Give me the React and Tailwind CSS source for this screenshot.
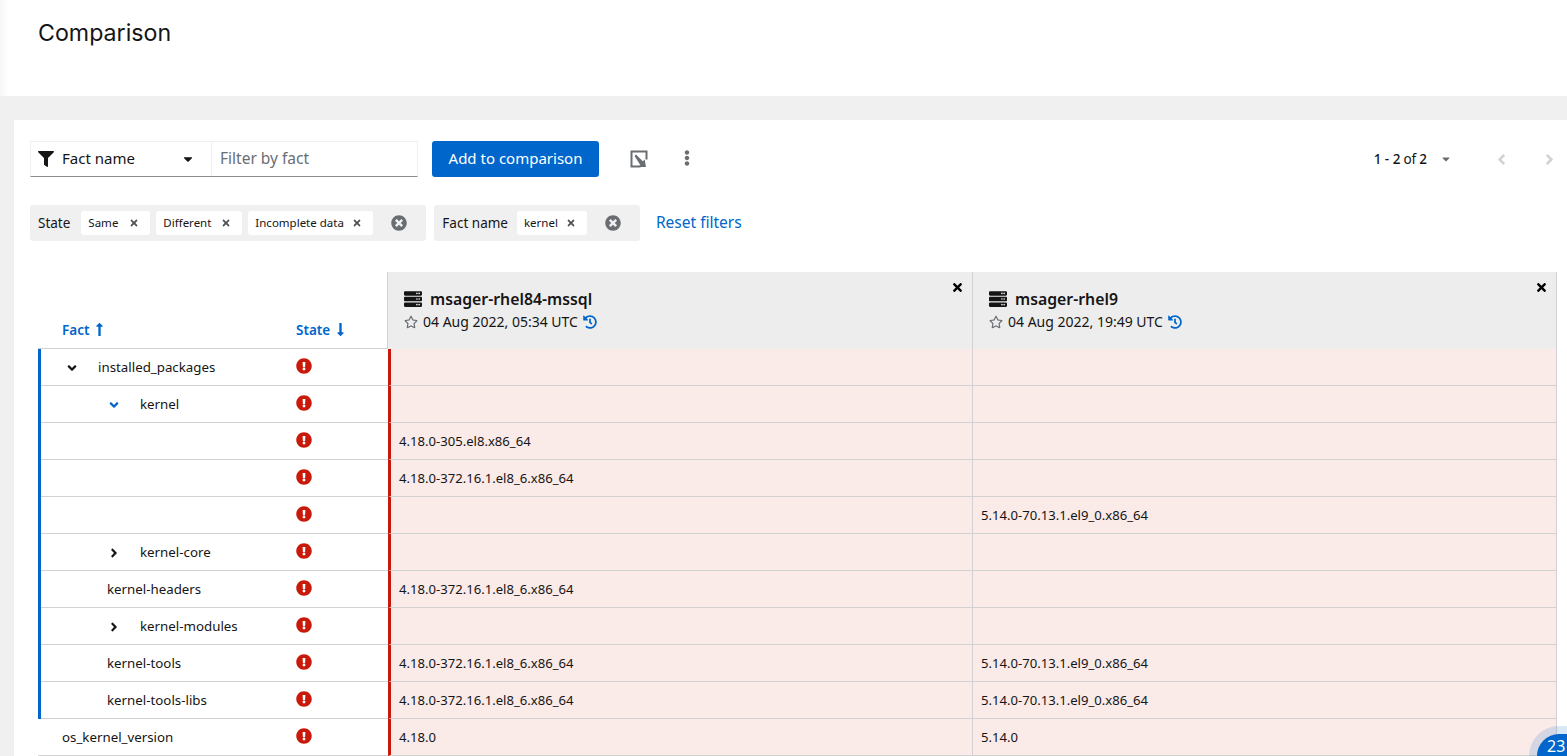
import React from 'react';
import {
  FaFilter, FaCaretDown, FaTimes, FaTimesCircle, FaExclamationCircle, FaAngleDown, FaAngleRight,
  FaAngleLeft, FaEllipsisV, FaLongArrowAltUp, FaLongArrowAltDown, FaServer, FaRegStar, FaHistory,
} from 'react-icons/fa';

const OLD_A = '4.18.0-372.16.1.el8_6.x86_64';
const NEW_A = '5.14.0-70.13.1.el9_0.x86_64';

const rows = [
  { name: 'installed_packages', toggle: 'down', indent: 'pl-[27px]', inGroup: true },
  { name: 'kernel', toggle: 'down-blue', indent: 'pl-[69px]', inGroup: true },
  { name: '', a: '4.18.0-305.el8.x86_64', inGroup: true },
  { name: '', a: OLD_A, inGroup: true },
  { name: '', b: NEW_A, inGroup: true },
  { name: 'kernel-core', toggle: 'right', indent: 'pl-[69px]', inGroup: true },
  { name: 'kernel-headers', a: OLD_A, indent: 'pl-[69px]', inGroup: true },
  { name: 'kernel-modules', toggle: 'right', indent: 'pl-[69px]', inGroup: true },
  { name: 'kernel-tools', a: OLD_A, b: NEW_A, indent: 'pl-[69px]', inGroup: true },
  { name: 'kernel-tools-libs', a: OLD_A, b: NEW_A, indent: 'pl-[69px]', inGroup: true },
  { name: 'os_kernel_version', a: '4.18.0', b: '5.14.0', indent: 'pl-[24px]' },
];

const ExportIcon = () => (
  <svg width="18" height="18" viewBox="0 0 18 18" className="text-[#6a6e73]">
    <path d="M0.5 0.5h17v9h-2v-7H2.5v13h8v2H0.5z" fill="currentColor" />
    <path d="M4.5 6l1.5-1.5 6.8 6.8 1.9-1.9 1.3 7.6h-7.6l1.9-1.9z" fill="currentColor" />
  </svg>
);

const Chip = ({ label, width }) => (
  <span className={`flex h-6 items-center rounded-[3px] bg-white px-[7px] text-[11.5px] text-[#151515] ${width}`}>
    {label}
    <FaTimes className="ml-auto mr-[4px] text-[10px] text-[#4f5255]" />
  </span>
);

const ChipGroup = ({ title, titleGap, chips }) => (
  <div className="flex h-9 items-center rounded-[3px] bg-[#f0f0f0] pl-2 text-[13.5px] text-[#151515]">
    <span className={titleGap}>{title}</span>
    <div className="flex gap-[6px]">
      {chips.map((c) => <Chip key={c.label} label={c.label} width={c.width} />)}
    </div>
    <FaTimesCircle className="ml-[18px] mr-[19px] text-[16px] text-[#6a6e73]" />
  </div>
);

const Toggle = ({ kind }) => {
  if (kind === 'right') return <FaAngleRight className="text-[14px] text-[#151515]" />;
  if (kind === 'down-blue') return <FaAngleDown className="text-[14px] text-[#06c]" />;
  return <FaAngleDown className="text-[14px] text-[#151515]" />;
};

const SystemHead = ({ name, date, width }) => (
  <div className={`${width} relative h-[77px] shrink-0 border-l border-[#d2d2d2] bg-[#ededed] pl-4 pt-[17px]`}>
    <div className="flex items-center text-[15.8px] font-semibold leading-5 text-[#151515]">
      <FaServer className="mr-[8px] text-[18px]" />
      {name}
    </div>
    <div className="mt-[3px] flex items-center text-[14px] leading-5 text-[#151515]">
      <FaRegStar className="mr-[5px] text-[14px] text-[#6a6e73]" />
      {date}
      <FaHistory className="ml-[5px] text-[14px] text-[#06c]" />
    </div>
    <FaTimes className="absolute right-[8px] top-[9px] text-[13px] text-black" />
  </div>
);

const Row = ({ row }) => (
  <div className="flex h-[37px] shrink-0">
    <div className="relative ml-2 flex w-[350px] shrink-0 items-center border-b border-[#d2d2d2] text-[13.3px] text-[#151515]">
      {row.inGroup && <span className="absolute -bottom-px left-0 top-0 w-[3px] bg-[#06c]" />}
      <div className={`flex w-[258px] items-center pt-[2px] ${row.indent || ''}`}>
        {row.toggle && <span className="flex w-[33px]"><Toggle kind={row.toggle} /></span>}
        {row.name}
      </div>
      <FaExclamationCircle className="mb-[2px] text-[16px] text-[#c9190b]" />
    </div>
    <div className="flex w-[584px] shrink-0 items-center border-b border-l-[3px] border-b-[#d2d2d2] border-l-[#c9190b] bg-[#faeae8] pl-[8px] pt-[2px] text-[13.1px] text-[#151515]">
      {row.a}
    </div>
    <div className="flex w-[585px] shrink-0 items-center border-b border-l border-r border-[#d2d2d2] bg-[#faeae8] pl-2 pt-[2px] text-[13.1px] text-[#151515]">
      {row.b}
    </div>
  </div>
);

export default function App() {
  return (
    <div className="relative flex h-screen flex-col overflow-hidden bg-[#f0f0f0] font-['Noto_Sans','Liberation_Sans',sans-serif]">
      <header className="h-[96px] shrink-0 bg-[linear-gradient(90deg,#f6f6f6,#ffffff_8px)] pl-[38px] pt-[18px] font-['Inter','Liberation_Sans',sans-serif] text-[23.2px] leading-[30px] text-[#151515]">
        Comparison
      </header>

      <main className="ml-[14px] mt-6 flex-1 bg-white pl-4">
        <div className="mt-[21px] flex h-[36px] items-center pr-[9px]">
          <div className="flex h-9 w-[388px] border border-[#f0f0f0] border-b-[#8a8d90]">
            <div className="flex w-[181px] items-center border-r border-[#f0f0f0] pl-[7px] text-[15px] text-[#151515]">
              <FaFilter className="text-[16px]" />
              <span className="mb-[2px] ml-[8px]">Fact name</span>
              <FaCaretDown className="ml-auto mr-4 text-[14px]" />
            </div>
            <div className="flex items-center pl-2 text-[15.5px] text-[#6a6e73]">Filter by fact</div>
          </div>
          <button className="ml-[14px] h-9 w-[167px] rounded-[3px] bg-[#06c] pb-[2px] text-center text-[15px] text-white">
            Add to comparison
          </button>
          <span className="ml-[31px] flex"><ExportIcon /></span>
          <FaEllipsisV className="mb-[2px] ml-[31px] text-[16px] text-[#6a6e73]" />
          <div className="ml-auto flex items-center text-[13.5px] text-[#151515]">
            <span className="font-medium">1 - 2</span>
            <span className="ml-[3px]">of</span>
            <span className="ml-[3px] font-medium">2</span>
            <FaCaretDown className="ml-[13px] text-[12px] text-[#6a6e73]" />
            <FaAngleLeft className="ml-[41px] text-[17px] text-[#d2d2d2]" />
            <FaAngleRight className="ml-[31px] text-[17px] text-[#d2d2d2]" />
          </div>
        </div>

        <div className="mt-7 flex h-9 items-center">
          <ChipGroup
            title="State"
            titleGap="mr-[11px]"
            chips={[
              { label: 'Same', width: 'w-[69px]' },
              { label: 'Different', width: 'w-[86px]' },
              { label: 'Incomplete data', width: 'w-[125px]' },
            ]}
          />
          <span className="w-2" />
          <ChipGroup title="Fact name" titleGap="mr-[9px]" chips={[{ label: 'kernel', width: 'w-[70px]' }]} />
          <span className="ml-4 text-[15.5px] text-[#06c]">Reset filters</span>
        </div>

        <div className="mt-[31px] flex">
          <div className="ml-2 flex h-[77px] w-[349px] shrink-0 items-end border-b border-[#d2d2d2] pb-[8px] text-[13.5px] font-semibold text-[#06c]">
            <span className="ml-[24px] flex w-[234px] items-center">
              Fact <FaLongArrowAltUp className="ml-[3px] text-[15px]" />
            </span>
            <span className="flex items-center">
              State <FaLongArrowAltDown className="ml-[3px] text-[15px]" />
            </span>
          </div>
          <SystemHead name="msager-rhel84-mssql" date="04 Aug 2022, 05:34 UTC" width="w-[585px]" />
          <SystemHead name="msager-rhel9" date="04 Aug 2022, 19:49 UTC" width="w-[585px] border-r" />
        </div>
        {rows.map((row, i) => <Row key={i} row={row} />)}
      </main>

      <div className="absolute -bottom-[22px] right-[-30px] flex h-[44px] w-[60px] items-start rounded-full bg-[#06c] pl-[10px] pt-[2px] text-[16px] leading-5 text-white shadow-[0_0_0_8px_rgba(0,102,204,0.15)]">
        23
      </div>
    </div>
  );
}
